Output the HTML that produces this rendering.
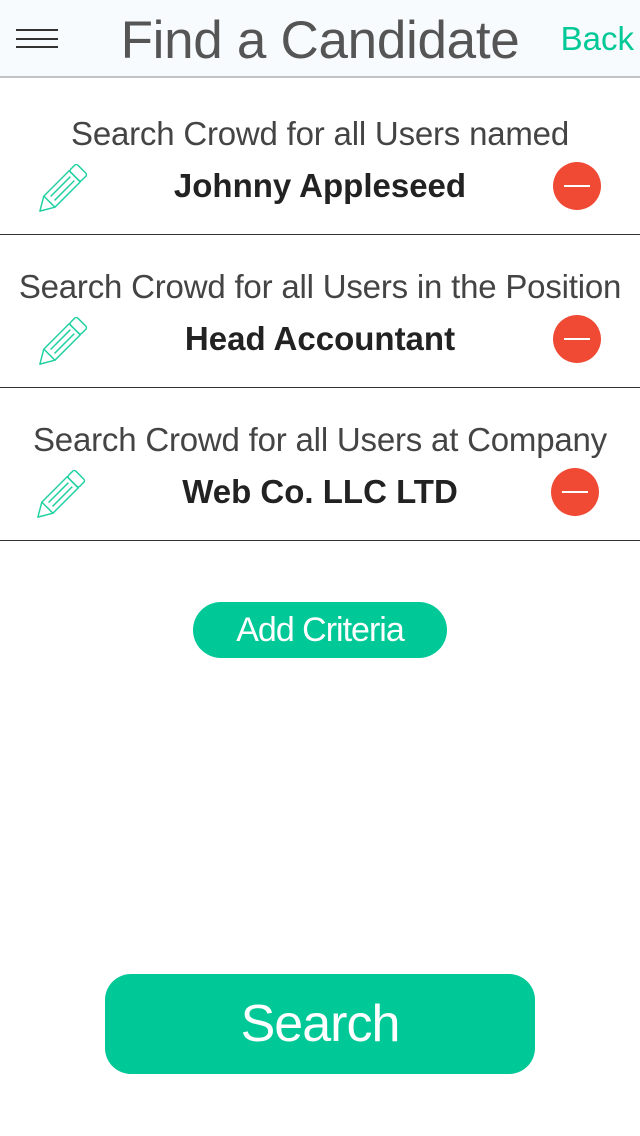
<!DOCTYPE html>
<html><head><meta charset="utf-8"><style>
*{margin:0;padding:0;box-sizing:border-box}
body{width:640px;height:1136px;background:#fff;font-family:"Liberation Sans",sans-serif;position:relative;overflow:hidden}
.hdr{position:absolute;left:0;top:0;width:640px;height:78px;background:#f8fbfd;border-bottom:2px solid #bfc3c6}
.ham{position:absolute;left:16px;width:42px;height:1.5px;background:#333}
.title{position:absolute;left:0;width:640px;top:10px;text-align:center;font-size:53px;color:#555;letter-spacing:-0.3px;font-weight:300}
.back{position:absolute;right:6px;top:20px;font-size:33px;color:#00c896}
.row{position:absolute;left:0;width:640px;height:153px;border-bottom:1px solid #333}
.lbl{position:absolute;left:0;width:640px;top:33px;text-align:center;font-size:33px;color:#444;letter-spacing:-0.2px}
.nm{position:absolute;left:0;width:640px;top:85px;text-align:center;font-size:33px;font-weight:bold;color:#222}
.min{position:absolute;width:48px;height:48px;border-radius:50%;background:#f04a35;top:80px}
.min::after{content:"";position:absolute;left:11px;right:11px;top:23px;height:1.5px;background:#fff}
.pen{position:absolute;left:38px;top:75px}
.add{position:absolute;left:193px;top:602px;width:254px;height:56px;border-radius:28px;background:#00c896;color:#fff;font-size:34px;text-align:center;line-height:56px;letter-spacing:-1px}
.srch{position:absolute;left:105px;top:974px;width:430px;height:100px;border-radius:26px;background:#00c896;color:#fff;font-size:52px;text-align:center;line-height:100px;letter-spacing:-1px}
</style></head><body>
<div class="hdr">
<div class="ham" style="top:29px"></div><div class="ham" style="top:38px"></div><div class="ham" style="top:46px"></div>
<div class="title">Find a Candidate</div>
<div class="back">Back</div>
</div>

<svg width="0" height="0" style="position:absolute"><defs>
<g id="p" fill="none" stroke="#1fd0a0" stroke-width="1.3" stroke-linejoin="round">
<g transform="rotate(-45 25 25)">
<rect x="4" y="18" width="32" height="14"/>
<rect x="36" y="18" width="9" height="14" rx="2"/>
<path d="M4 18 L-8 25 L4 32"/>
<path d="M8 22.5 H33 M8 27.5 H33"/>
</g></g></defs></svg>

<div class="row" style="top:82px">
<div class="lbl">Search Crowd for all Users named</div>
<div class="nm">Johnny Appleseed</div>
<svg class="pen" width="56" height="56" viewBox="0 0 50 50"><use href="#p"/></svg>
<div class="min" style="left:553px"></div>
</div>
<div class="row" style="top:235px">
<div class="lbl">Search Crowd for all Users in the Position</div>
<div class="nm">Head Accountant</div>
<svg class="pen" width="56" height="56" viewBox="0 0 50 50"><use href="#p"/></svg>
<div class="min" style="left:553px"></div>
</div>
<div class="row" style="top:388px">
<div class="lbl">Search Crowd for all Users at Company</div>
<div class="nm">Web Co. LLC LTD</div>
<svg class="pen" width="56" height="56" viewBox="0 0 50 50" style="left:36px"><use href="#p"/></svg>
<div class="min" style="left:551px"></div>
</div>

<div class="add">Add Criteria</div>
<div class="srch">Search</div>
</body></html>
